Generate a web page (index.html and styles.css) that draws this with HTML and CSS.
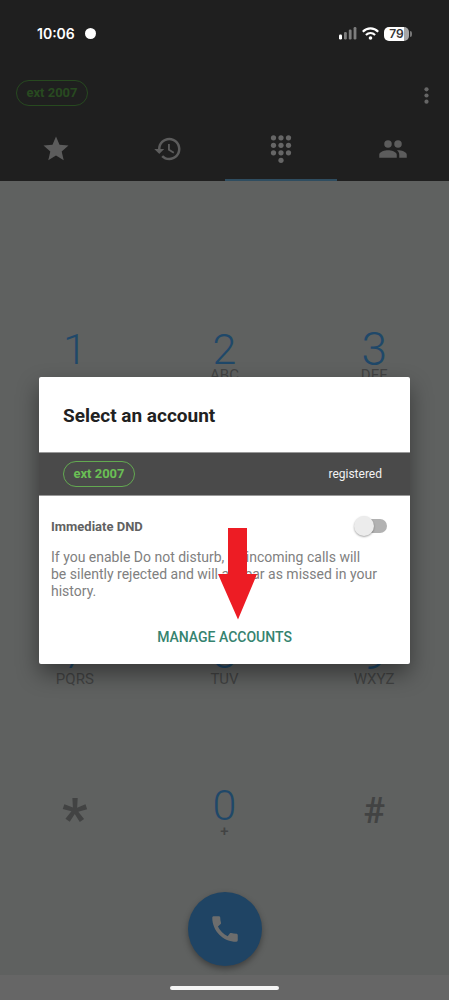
FILE: index.html
```html
<!DOCTYPE html>
<html lang="en">
<head>
<meta charset="utf-8">
<meta name="viewport" content="width=device-width, initial-scale=1">
<title>Select an account</title>
<link rel="stylesheet" href="styles.css">
</head>
<body>
<div class="phone">
  <header class="header">
    <div class="status">
      <div class="status-group"><span class="clock">10:06</span><span class="status-dot"></span></div>
      <div class="status-group status-icons">
        <svg width="18" height="13" viewBox="0 0 18 13" fill="#7d7d7d"><rect y="7.5" width="3" height="5" rx="1.2" fill="#fff"/><rect x="5" y="5" width="2.8" height="7.5" rx="1.2"/><rect x="9.8" y="2.5" width="2.8" height="10" rx="1.2"/><rect x="14.6" y="0" width="2.8" height="12.5" rx="1.2"/></svg>
        <svg width="17" height="13" viewBox="0 0 17 13" fill="none" stroke="#fff" stroke-width="2.1"><path d="M.8 4.8C5.2.2 11.8.2 16.2 4.8M3.9 8.1c2.7-2.6 6.5-2.6 9.2 0"/><circle cx="8.5" cy="11" r="1.8" fill="#fff" stroke="none"/></svg>
        <span class="battery">79</span>
      </div>
    </div>
    <div class="appbar">
      <button class="chip chip-dim">ext 2007</button>
      <button class="more" aria-label="More options"><svg width="5" height="17" viewBox="0 0 5 17" fill="#666"><circle cx="2.5" cy="2.3" r="2.1"/><circle cx="2.5" cy="8.5" r="2.1"/><circle cx="2.5" cy="14.7" r="2.1"/></svg></button>
    </div>
    <nav class="tabs">
      <button class="tab" aria-label="Favourites"><svg width="30" height="30" viewBox="0 0 24 24"><path d="M12 17.27 18.18 21l-1.64-7.03L22 9.24l-7.19-.61L12 2 9.19 8.63 2 9.24l5.46 4.73L5.82 21z"/></svg></button>
      <button class="tab" aria-label="History"><svg width="30" height="30" viewBox="0 0 24 24"><path d="M13 3c-4.97 0-9 4.03-9 9H1l3.89 3.89.07.14L9 12H6c0-3.87 3.13-7 7-7s7 3.13 7 7-3.13 7-7 7c-1.93 0-3.68-.79-4.94-2.06l-1.42 1.42C8.27 19.99 10.51 21 13 21c4.97 0 9-4.03 9-9s-4.03-9-9-9zm-1 5v5l4.28 2.54.72-1.21-3.5-2.08V8H12z"/></svg></button>
      <button class="tab tab-active" aria-label="Dial pad"><svg width="30" height="30" viewBox="0 0 24 24"><circle cx="6" cy="3" r="2.1"/><circle cx="12" cy="3" r="2.1"/><circle cx="18" cy="3" r="2.1"/><circle cx="6" cy="9" r="2.1"/><circle cx="12" cy="9" r="2.1"/><circle cx="18" cy="9" r="2.1"/><circle cx="6" cy="15" r="2.1"/><circle cx="12" cy="15" r="2.1"/><circle cx="18" cy="15" r="2.1"/><circle cx="12" cy="21" r="2.1"/></svg></button>
      <button class="tab" aria-label="Contacts"><svg width="30" height="30" viewBox="0 0 24 24"><circle cx="8" cy="8" r="3"/><circle cx="16" cy="8" r="3"/><path d="M8 13c-2.33 0-7 1.17-7 3.5V19h14v-2.5c0-2.33-4.67-3.5-7-3.5zM16 13c-.29 0-.62.02-.97.05 1.16.84 1.97 1.97 1.97 3.45V19h6v-2.5c0-2.33-4.67-3.5-7-3.5z"/></svg></button>
    </nav>
  </header>
  <main class="dialer">
    <div class="keypad">
      <button class="key"><span class="digit">1</span></button>
      <button class="key"><span class="digit">2</span><span class="letters">ABC</span></button>
      <button class="key"><span class="digit digit-large">3</span><span class="letters">DEF</span></button>
      <button class="key"><span class="digit">4</span><span class="letters">GHI</span></button>
      <button class="key"><span class="digit">5</span><span class="letters">JKL</span></button>
      <button class="key"><span class="digit">6</span><span class="letters">MNO</span></button>
      <button class="key"><span class="digit">7</span><span class="letters">PQRS</span></button>
      <button class="key"><span class="digit">8</span><span class="letters">TUV</span></button>
      <button class="key"><span class="digit digit-large">9</span><span class="letters">WXYZ</span></button>
      <button class="key"><span class="symbol star">*</span></button>
      <button class="key"><span class="digit">0</span><span class="letters plus">+</span></button>
      <button class="key"><span class="symbol">#</span></button>
    </div>
    <button class="call" aria-label="Call"><svg width="34" height="34" viewBox="0 0 24 24" fill="#6c6d6d"><path d="M20.01 15.38c-1.23 0-2.42-.2-3.53-.56-.35-.12-.74-.03-1.01.24l-1.57 1.97c-2.83-1.35-5.48-3.9-6.89-6.83l1.95-1.66c.27-.28.35-.67.24-1.02-.37-1.11-.56-2.3-.56-3.53 0-.54-.45-.99-.99-.99H4.19C3.65 3 3 3.24 3 3.99 3 13.28 10.73 21 20.01 21c.71 0 .99-.63.99-1.18v-3.45c0-.54-.45-.99-.99-.99z"/></svg></button>
  </main>
  <footer class="gesture"><span class="pill"></span></footer>
  <div class="overlay">
    <section class="dialog" role="dialog" aria-labelledby="title">
      <h1 class="title" id="title">Select an account</h1>
      <div class="account"><button class="chip">ext 2007</button><span>registered</span></div>
      <div class="body">
        <div class="dnd"><label for="dnd">Immediate DND</label><input class="switch" type="checkbox" role="switch" id="dnd"></div>
        <p class="note">If you enable Do not disturb, all incoming calls will<br>be silently rejected and will appear as missed in your<br>history.</p>
        <button class="manage">MANAGE ACCOUNTS</button>
      </div>
      <svg class="arrow" width="40" height="92" viewBox="0 0 40 92" aria-hidden="true"><path fill="#ed1c24" d="M10 0h19v46h10L20 91.5 0 46h10z"/></svg>
    </section>
  </div>
</div>
</body>
</html>
```
FILE: styles.css
```css
* { box-sizing: border-box; }
body { margin: 0; font-family: Roboto, "Liberation Sans", sans-serif; }
button { border: 0; padding: 0; margin: 0; background: none; color: inherit; font: inherit; }
svg { display: block; }
.phone { position: relative; display: flex; flex-direction: column; min-height: 100vh; background: #5f6160; }
.header { background: #1f1f1f; }
.status { display: flex; justify-content: space-between; align-items: center; height: 67px; padding: 0 40px 0 37px; color: #fff; }
.status-group { display: flex; align-items: center; gap: 10px; }
.status-icons { gap: 5px; }
.clock { font: 600 14px/20px Inter, sans-serif; }
.status-dot { width: 11px; height: 11px; border-radius: 50%; background: #fff; }
.battery { position: relative; width: 25px; height: 14px; border-radius: 5px; background: linear-gradient(90deg, #fff 80%, #a5a5a5 80%); color: #333; font: 600 12px/14px Inter, sans-serif; text-align: center; }
.battery::after { content: ""; position: absolute; left: 26px; top: 4px; width: 2px; height: 6px; border-radius: 0 2px 2px 0; background: #777; }
.appbar { display: flex; justify-content: space-between; align-items: center; height: 52px; padding: 0 16px; }
.chip { height: 26px; width: 72px; border: 1px solid #63a951; border-radius: 13px; color: #6abf55; font-size: 13px; font-weight: 700; line-height: 24px; white-space: nowrap; }
.chip-dim { border-color: #27491f; color: #284a20; }
.more { padding: 6px 4px 2px; }
.tabs { display: grid; grid-template-columns: repeat(4, 1fr); height: 62px; }
.tab { display: grid; place-items: center; border-bottom: 2px solid transparent; fill: #5c5c5c; }
.tab-active { border-color: #2f4d60; fill: #666; }
.dialer { flex: 1; display: flex; flex-direction: column; align-items: center; padding: 98px 0 9px; }
.keypad { display: grid; grid-template-columns: repeat(3, 1fr); grid-auto-rows: 152px; width: 100%; }
.key { display: flex; flex-direction: column; align-items: center; justify-content: flex-start; padding-top: 52px; }
.digit { height: 36px; color: #1f4869; font-size: 43px; font-weight: 300; line-height: 36px; }
.digit-large { font-size: 46px; }
.letters { color: #424343; font-size: 15px; line-height: 16px; }
.plus { font-weight: 500; }
.symbol { color: #424343; font-size: 36px; font-weight: 500; line-height: 48px; }
.star { font-size: 56px; font-weight: 700; line-height: 64px; }
.call { display: grid; place-items: center; width: 74px; height: 74px; margin-top: 5px; border-radius: 50%; background: #1f4464; box-shadow: 0 3px 6px rgba(0, 0, 0, .35); }
.gesture { display: grid; place-items: center; height: 25px; background: #666; }
.pill { width: 109px; height: 4px; border-radius: 2px; background: #f5f5f5; }
.overlay { position: absolute; inset: 0; display: grid; align-items: center; padding: 41px 39px 0; }
.dialog { position: relative; border-radius: 2px; background: #fff; color: #212121; box-shadow: 0 10px 22px rgba(0, 0, 0, .42); }
.title { margin: 0; padding: 27px 24px 24px; font-size: 19px; font-weight: 700; line-height: 24px; }
.account { display: flex; justify-content: space-between; align-items: center; height: 44px; padding: 0 28px 0 24px; border-top: 1px solid #999; border-bottom: 1px solid #999; background: #4a4a4a; color: #f2f2f2; font-size: 12px; }
.body { display: flex; flex-direction: column; padding: 18px 12px 9px; }
.dnd { display: flex; align-items: center; justify-content: space-between; height: 24px; padding-right: 11px; color: #616161; font-size: 13px; font-weight: 700; }
.switch { appearance: none; position: relative; width: 30px; height: 14px; margin: 0; border-radius: 7px; background: #b2b2b2; }
.switch::before { content: ""; position: absolute; left: -3px; top: -3px; width: 20px; height: 20px; border-radius: 50%; background: #ececec; box-shadow: 0 1px 2px rgba(0, 0, 0, .35); }
.note { margin: 11px 0 0; color: #808080; font-size: 14px; line-height: 17px; white-space: nowrap; }
.manage { align-self: center; height: 36px; margin-top: 19px; color: #35836f; font-size: 14px; font-weight: 500; }
.arrow { position: absolute; left: 50%; top: 151px; margin-left: -7px; }
```
